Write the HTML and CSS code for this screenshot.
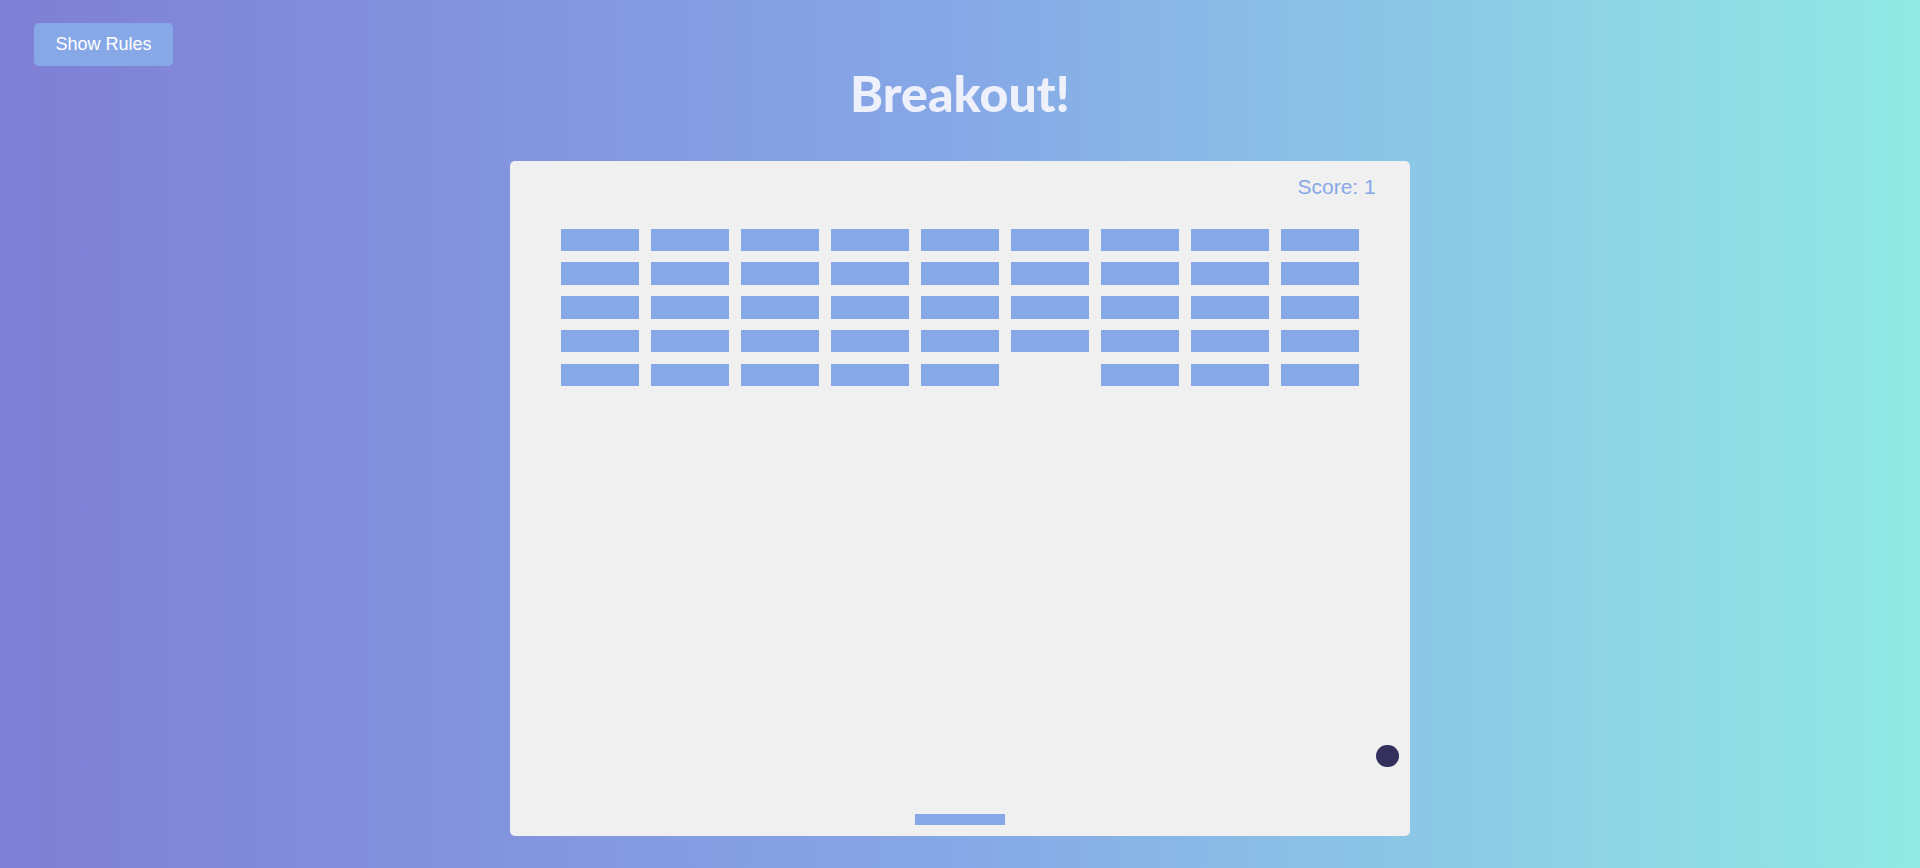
FILE: index.html
```html
<!DOCTYPE html>
<html lang="en">
<head>
<meta charset="UTF-8">
<title>Breakout!</title>
<link rel="stylesheet" href="styles.css">
</head>
<body>
<button class="btn rules-btn">Show Rules</button>
<h1 class="title">Breakout!</h1>
<div class="board">
  <div class="score">Score: 1</div>
  <div class="bricks">
    <span class="brick"></span><span class="brick"></span><span class="brick"></span><span class="brick"></span><span class="brick"></span><span class="brick"></span><span class="brick"></span><span class="brick"></span><span class="brick"></span>
    <span class="brick"></span><span class="brick"></span><span class="brick"></span><span class="brick"></span><span class="brick"></span><span class="brick"></span><span class="brick"></span><span class="brick"></span><span class="brick"></span>
    <span class="brick"></span><span class="brick"></span><span class="brick"></span><span class="brick"></span><span class="brick"></span><span class="brick"></span><span class="brick"></span><span class="brick"></span><span class="brick"></span>
    <span class="brick"></span><span class="brick"></span><span class="brick"></span><span class="brick"></span><span class="brick"></span><span class="brick"></span><span class="brick"></span><span class="brick"></span><span class="brick"></span>
    <span class="brick"></span><span class="brick"></span><span class="brick"></span><span class="brick"></span><span class="brick"></span><span class="brick broken"></span><span class="brick"></span><span class="brick"></span><span class="brick"></span>
  </div>
  <div class="ball"></div>
  <div class="paddle"></div>
</div>
</body>
</html>
```

FILE: styles.css
```css
* { box-sizing: border-box; }

html, body { height: 100%; }

body {
  margin: 0;
  min-height: 868px;
  background: linear-gradient(to right, #7f7fd5, #86a8e7, #91eae4);
  display: flex;
  flex-direction: column;
  align-items: center;
  font-family: "Liberation Sans", Arial, sans-serif;
  overflow: hidden;
}

.btn {
  cursor: pointer;
  border: 0;
  padding: 11px 21.5px;
  background: #86a8e7;
  color: #fff;
  border-radius: 5px;
  font-family: "Liberation Sans", Arial, sans-serif;
  font-size: 18px;
  line-height: 21px;
}

.rules-btn {
  position: absolute;
  top: 23px;
  left: 34px;
}

.title {
  margin: 63px 0 0;
  font-family: "Lato", "Noto Sans", sans-serif;
  font-weight: 900;
  font-size: 50px;
  line-height: 60px;
  letter-spacing: 0;
  color: #eef1fb;
}

.board {
  margin-top: 38px;
  position: relative;
  width: 900px;
  height: 675px;
  background: #f0f0f0;
  border-radius: 5px;
}

.score {
  position: absolute;
  left: 787.5px;
  top: 14px;
  font-size: 21px;
  line-height: 24px;
  color: #86a8e7;
}

.bricks {
  display: grid;
  grid-template-columns: repeat(9, 78.75px);
  grid-auto-rows: 22.5px;
  gap: 11.25px;
  padding: 67.5px 0 0 50.625px;
}

.brick {
  background: #86a8e7;
}

.brick.broken { visibility: hidden; }

.ball {
  position: absolute;
  left: 866.25px;
  top: 583.5px;
  width: 22.5px;
  height: 22.5px;
  border-radius: 50%;
  background: #33305e;
}

.paddle {
  position: absolute;
  left: 405px;
  top: 652.5px;
  width: 90px;
  height: 11.25px;
  background: #86a8e7;
}
```
